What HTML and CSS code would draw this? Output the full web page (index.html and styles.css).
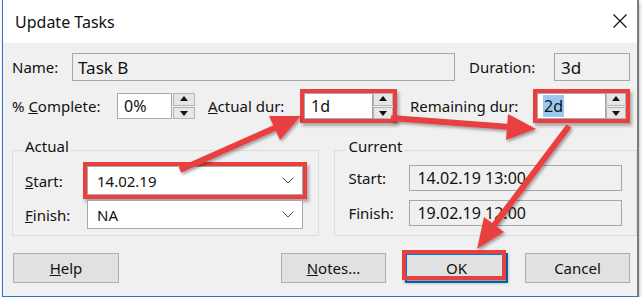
FILE: index.html
```html
<!DOCTYPE html>
<html lang="en">
<head>
    <meta charset="UTF-8">
    <title>Update Tasks</title>
    <link rel="stylesheet" href="styles.css">
</head>
<body>
    <div class="window">
        <div class="titlebar">
            <span class="title">Update Tasks</span>
            <svg class="close" width="16" height="16" viewBox="0 0 16 16">
                <path d="M1.5 1.5 L14.5 14.5 M14.5 1.5 L1.5 14.5" stroke="#111" stroke-width="1.2" fill="none"/>
            </svg>
        </div>

        <div class="dialog">
            <div class="row row-top">
                <span class="label name-label">Name:</span>
                <span class="field readonly name-field">Task B</span>
                <span class="label duration-label">Duration:</span>
                <span class="field readonly duration-field">3d</span>
            </div>

            <div class="row row-spin">
                <span class="label complete-label">% <u>C</u>omplete:</span>
                <span class="spin">
                    <span class="field complete-field">0%</span>
                    <span class="spinner"><span class="up"></span><span class="down"></span></span>
                </span>
                <span class="label actual-label"><u>A</u>ctual dur:</span>
                <span class="spin marked">
                    <span class="field dur-field">1d</span>
                    <span class="spinner narrow"><span class="up"></span><span class="down"></span></span>
                </span>
                <span class="label remaining-label">Remaining dur:</span>
                <span class="spin marked">
                    <span class="field dur-field"><span class="selected">2d</span></span>
                    <span class="spinner narrow"><span class="up"></span><span class="down"></span></span>
                </span>
            </div>

            <div class="groups">
                <fieldset class="group group-actual">
                    <legend>Actual</legend>
                    <div class="group-row first">
                        <span class="label"><u>S</u>tart:</span>
                        <span class="combo marked">14.02.19
                            <svg class="chevron" width="12" height="7" viewBox="0 0 12 7"><path d="M0.5 0.5 L6 6 L11.5 0.5" stroke="#444" fill="none"/></svg>
                        </span>
                    </div>
                    <div class="group-row">
                        <span class="label"><u>F</u>inish:</span>
                        <span class="combo">NA
                            <svg class="chevron" width="12" height="7" viewBox="0 0 12 7"><path d="M0.5 0.5 L6 6 L11.5 0.5" stroke="#444" fill="none"/></svg>
                        </span>
                    </div>
                </fieldset>

                <fieldset class="group group-current">
                    <legend>Current</legend>
                    <div class="group-row first">
                        <span class="label">Start:</span>
                        <span class="field readonly current-field">14.02.19 13:00</span>
                    </div>
                    <div class="group-row">
                        <span class="label">Finish:</span>
                        <span class="field readonly current-field">19.02.19 12:00</span>
                    </div>
                </fieldset>
            </div>

            <div class="buttons">
                <button type="button" class="btn help-btn"><u>H</u>elp</button>
                <button type="button" class="btn notes-btn"><u>N</u>otes...</button>
                <button type="button" class="btn ok-btn">OK</button>
                <button type="button" class="btn cancel-btn">Cancel</button>
            </div>
        </div>
    </div>

    <!-- red annotation arrows drawn over the dialog -->
    <svg class="arrows" width="644" height="301" viewBox="0 0 644 301">
        <defs>
            <filter id="shade" x="-20%" y="-20%" width="140%" height="140%">
                <feDropShadow dx="1.5" dy="2" stdDeviation="1.5" flood-color="#000" flood-opacity="0.35"/>
            </filter>
        </defs>
        <g filter="url(#shade)" fill="#e8403f" stroke="#e8403f">
            <line x1="180" y1="170" x2="279" y2="126" stroke-width="6"/>
            <polygon points="301,116 280,140 269,116" stroke="none"/>
            <line x1="391" y1="118" x2="510" y2="127" stroke-width="6"/>
            <polygon points="536,129 506,140 508,114" stroke="none"/>
            <line x1="569" y1="126" x2="492" y2="228" stroke-width="6"/>
            <polygon points="477,249 484,217 504,232" stroke="none"/>
        </g>
    </svg>
</body>
</html>
```

FILE: styles.css
```css
body {
    margin: 0;
    background-color: #fff;
    font-family: "Noto Sans", "Open Sans", sans-serif;
    color: #111;
    position: relative;
}

.window {
    margin-left: 2px;
    width: 637px;
    height: 297px;
    box-sizing: border-box;
    border-left: 1px solid #2f72c8;
    border-bottom: 1px solid #2f72c8;
    border-right: 2px solid #7d7d7d;
    box-shadow: 1px 2px 3px rgba(0, 0, 0, 0.25);
}

.titlebar {
    height: 43px;
    background-color: #fff;
    display: flex;
    align-items: center;
    padding-left: 12px;
}

.title {
    font-size: 16px;
    flex: 1;
    margin-top: 1px;
}

.close {
    margin-right: 9px;
    margin-top: -2px;
}

.dialog {
    height: 253px;
    box-sizing: border-box;
    background-color: #f0f0f0;
    padding: 10px 0 0 9px;
}

.row {
    display: flex;
    align-items: center;
}

.label {
    font-size: 15px;
    white-space: nowrap;
}

.field {
    box-sizing: border-box;
    display: flex;
    align-items: center;
    border: 1px solid #a8a8a8;
    background-color: #fff;
    font-size: 16px;
    padding-left: 6px;
    white-space: nowrap;
}

.field.readonly {
    background-color: #f0f0f0;
}

/* first row */
.row-top {
    height: 28px;
}

.name-label {
    width: 60px;
}

.name-field {
    width: 383px;
    height: 28px;
    font-size: 17px;
    padding-left: 5px;
}

.duration-label {
    margin-left: 14px;
    width: 85px;
}

.duration-field {
    width: 76px;
    height: 28px;
    font-size: 17px;
}

/* second row */
.row-spin {
    margin-top: 12px;
    height: 26px;
}

.complete-label {
    width: 105px;
}

.actual-label {
    margin-left: 13px;
    width: 96px;
}

.remaining-label {
    margin-left: 17px;
    width: 127px;
}

.spin {
    display: flex;
    height: 26px;
}

.complete-field {
    width: 55px;
}

.dur-field {
    width: 69px;
}

.selected {
    background-color: #99c9ef;
    padding: 0 1px;
    margin-left: -1px;
}

.spinner {
    width: 22px;
    margin-left: 1px;
    display: flex;
    flex-direction: column;
    gap: 1px;
}

.spinner.narrow {
    width: 20px;
    margin-left: 0;
}

.spinner .up,
.spinner .down {
    flex: 1;
    box-sizing: border-box;
    border: 1px solid #b4b4b4;
    background-color: #e6e6e6;
    position: relative;
}

.spinner .up::after,
.spinner .down::after {
    content: "";
    position: absolute;
    left: 50%;
    top: 50%;
    margin-left: -4px;
    border-left: 4px solid transparent;
    border-right: 4px solid transparent;
}

.spinner .up::after {
    margin-top: -3px;
    border-bottom: 5px solid #111;
}

.spinner .down::after {
    margin-top: -2px;
    border-top: 5px solid #111;
}

.marked {
    box-shadow: 0 0 0 4px #e8403f, 2px 3px 3px 4px rgba(0, 0, 0, 0.3);
}

/* group boxes */
.groups {
    display: flex;
    margin-top: 18px;
}

.group {
    margin: 0;
    padding: 0;
    border: 1px solid #dcdcdc;
    min-width: 0;
}

.group legend {
    font-size: 15px;
    line-height: 18px;
    margin-left: -2px;
    padding: 0 2px 8px;
}

.group-actual {
    width: 303px;
    padding: 0 0 6px 12px;
}

.group-current {
    width: 297px;
    margin-left: 15px;
    padding: 0 0 9px 13px;
}

.group-row {
    display: flex;
    align-items: center;
}

.group-actual .group-row {
    height: 29px;
    margin-top: 5px;
}

.group-actual .group-row.first {
    margin-top: 3px;
}

.group-current .group-row {
    height: 26px;
    margin-top: 9px;
}

.group-current .group-row.first {
    margin-top: 2px;
}

.group-actual .label {
    width: 62px;
}

.group-current .label {
    width: 61px;
}

.combo {
    box-sizing: border-box;
    width: 216px;
    height: 29px;
    display: flex;
    align-items: center;
    justify-content: space-between;
    border: 1px solid #a8a8a8;
    background-color: #fff;
    font-size: 15px;
    padding: 0 8px 0 9px;
}

.current-field {
    width: 213px;
    height: 26px;
    padding-left: 7px;
}

/* buttons */
.buttons {
    display: flex;
    margin-top: 17px;
}

.btn {
    box-sizing: border-box;
    height: 30px;
    border: 1px solid #adadad;
    background-color: #e1e1e1;
    font-family: "Noto Sans", "Open Sans", sans-serif;
    font-size: 15px;
    color: #111;
    padding: 0;
}

.help-btn {
    margin-left: 1px;
    width: 106px;
}

.notes-btn {
    margin-left: 162px;
    width: 105px;
}

.ok-btn {
    margin-left: 19px;
    width: 103px;
    border: 2px solid #0078d7;
    position: relative;
}

.ok-btn::after {
    content: "";
    position: absolute;
    left: -5px;
    top: -5px;
    right: 0;
    bottom: 1px;
    border: 4px solid #e8403f;
    box-shadow: 2px 3px 3px rgba(0, 0, 0, 0.3);
}

.cancel-btn {
    margin-left: 17px;
    width: 105px;
}

.arrows {
    position: absolute;
    left: 0;
    top: 0;
    pointer-events: none;
}
```
